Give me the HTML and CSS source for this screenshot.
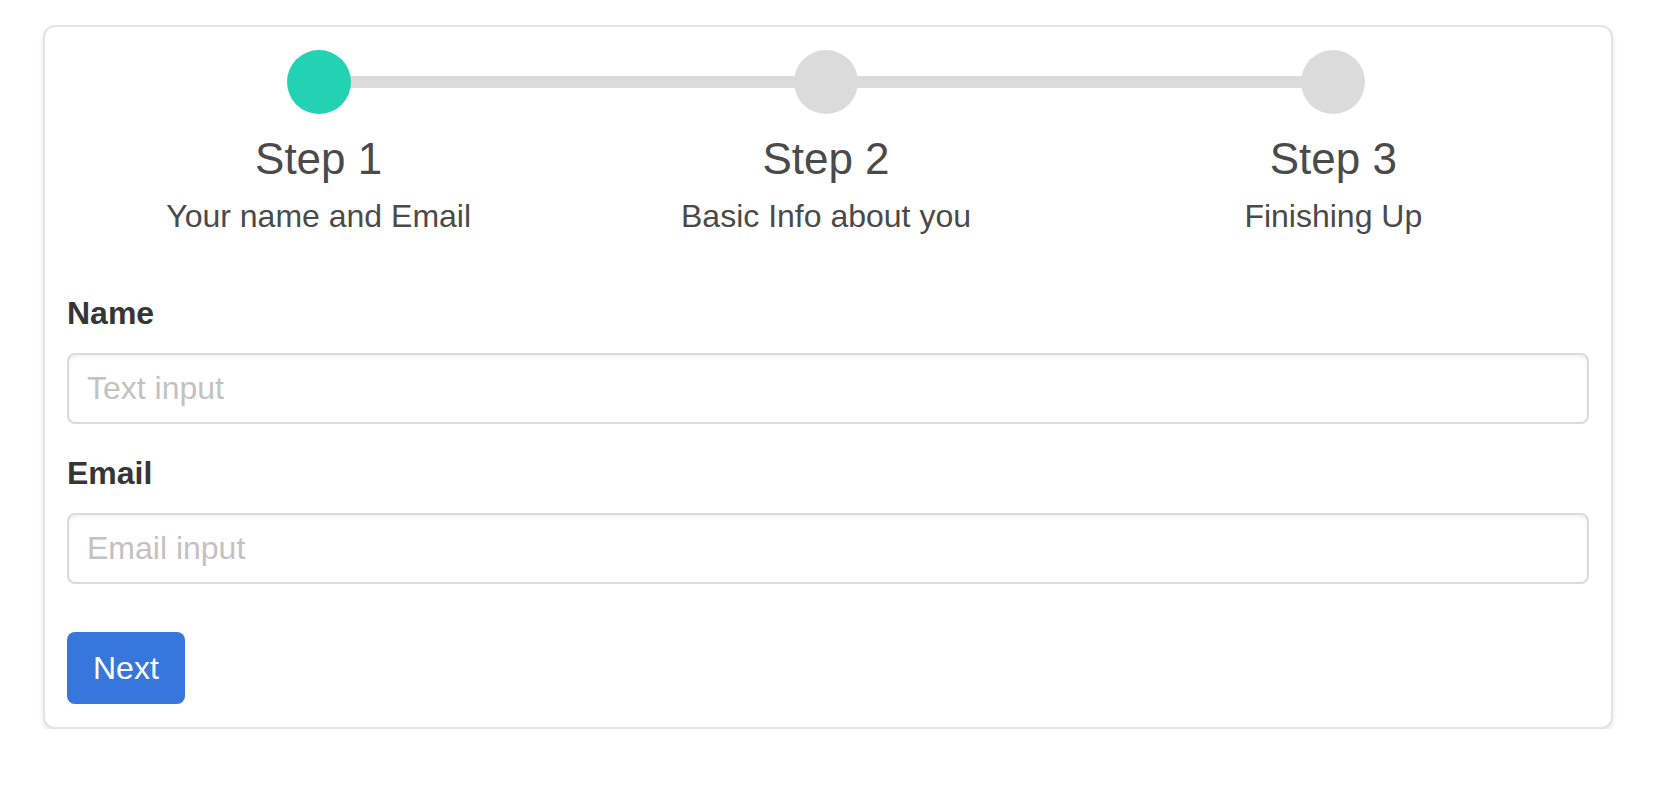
FILE: index.html
```html
<!DOCTYPE html>
<html lang="en">
<head>
<meta charset="utf-8">
<title>Steps form</title>
<link rel="stylesheet" href="styles.css">
</head>
<body>
  <div class="box">
    <div class="steps">
      <div class="step-item is-active">
        <div class="step-marker"></div>
        <div class="step-title">Step 1</div>
        <div class="step-subtitle">Your name and Email</div>
      </div>
      <div class="step-item">
        <div class="step-marker"></div>
        <div class="step-title">Step 2</div>
        <div class="step-subtitle">Basic Info about you</div>
      </div>
      <div class="step-item">
        <div class="step-marker"></div>
        <div class="step-title">Step 3</div>
        <div class="step-subtitle">Finishing Up</div>
      </div>
    </div>
    <form class="form">
      <div class="field">
        <label class="label" for="name">Name</label>
        <input class="input" id="name" type="text" placeholder="Text input">
      </div>
      <div class="field">
        <label class="label" for="email">Email</label>
        <input class="input" id="email" type="email" placeholder="Email input">
      </div>
      <div class="actions">
        <button class="button" type="button">Next</button>
      </div>
    </form>
  </div>
</body>
</html>
```
FILE: styles.css
```css
* { box-sizing: border-box; }

html, body {
  margin: 0;
  padding: 0;
  background: #ffffff;
}

body {
  font-family: "Liberation Sans", Arial, sans-serif;
  color: #4a4a4a;
}

.box {
  margin: 25px 0 0 43px;
  width: 1570px;
  padding: 23px 22px 23px 22px;
  background: #ffffff;
  border: 2px solid #e3e3e3;
  border-radius: 12px;
  box-shadow: 0 3px 5px rgba(10, 10, 10, 0.1);
}

.steps {
  display: flex;
  margin: 0 2px 0 -2px;
}

.step-item {
  flex: 1 1 0;
  position: relative;
  display: flex;
  flex-direction: column;
  align-items: center;
}

.step-item:not(:last-child)::before {
  content: "";
  position: absolute;
  top: 26px;
  left: 50%;
  width: 100%;
  height: 12px;
  background: #dbdbdb;
}

.step-marker {
  position: relative;
  z-index: 1;
  width: 64px;
  height: 64px;
  border-radius: 50%;
  background: #dbdbdb;
}

.step-item.is-active .step-marker {
  background: #23d1b3;
}

.step-title {
  margin-top: 19px;
  font-size: 44px;
  line-height: 52px;
  color: #4a4a4a;
}

.step-subtitle {
  margin-top: 11px;
  font-size: 32px;
  line-height: 40px;
  color: #4a4a4a;
}

.form {
  margin-top: 57px;
  display: flex;
  flex-direction: column;
}

.field {
  display: flex;
  flex-direction: column;
}

.field + .field {
  margin-top: 29px;
}

.label {
  font-size: 32px;
  line-height: 40px;
  font-weight: bold;
  color: #363636;
  margin-bottom: 20px;
}

.input {
  height: 71px;
  width: 100%;
  margin: 0;
  padding: 0 18px;
  border: 2px solid #dbdbdb;
  border-radius: 8px;
  box-shadow: inset 0 2px 4px rgba(10, 10, 10, 0.06);
  font-family: "Liberation Sans", Arial, sans-serif;
  font-size: 32px;
  color: #363636;
  background: #ffffff;
  outline: none;
}

.input::placeholder {
  color: #c2c2c2;
}

.actions {
  margin-top: 48px;
  display: flex;
}

.button {
  height: 72px;
  padding: 0 26px;
  border: none;
  border-radius: 8px;
  background: #3777db;
  color: #ffffff;
  font-family: "Liberation Sans", Arial, sans-serif;
  font-size: 32px;
  cursor: pointer;
}
```
